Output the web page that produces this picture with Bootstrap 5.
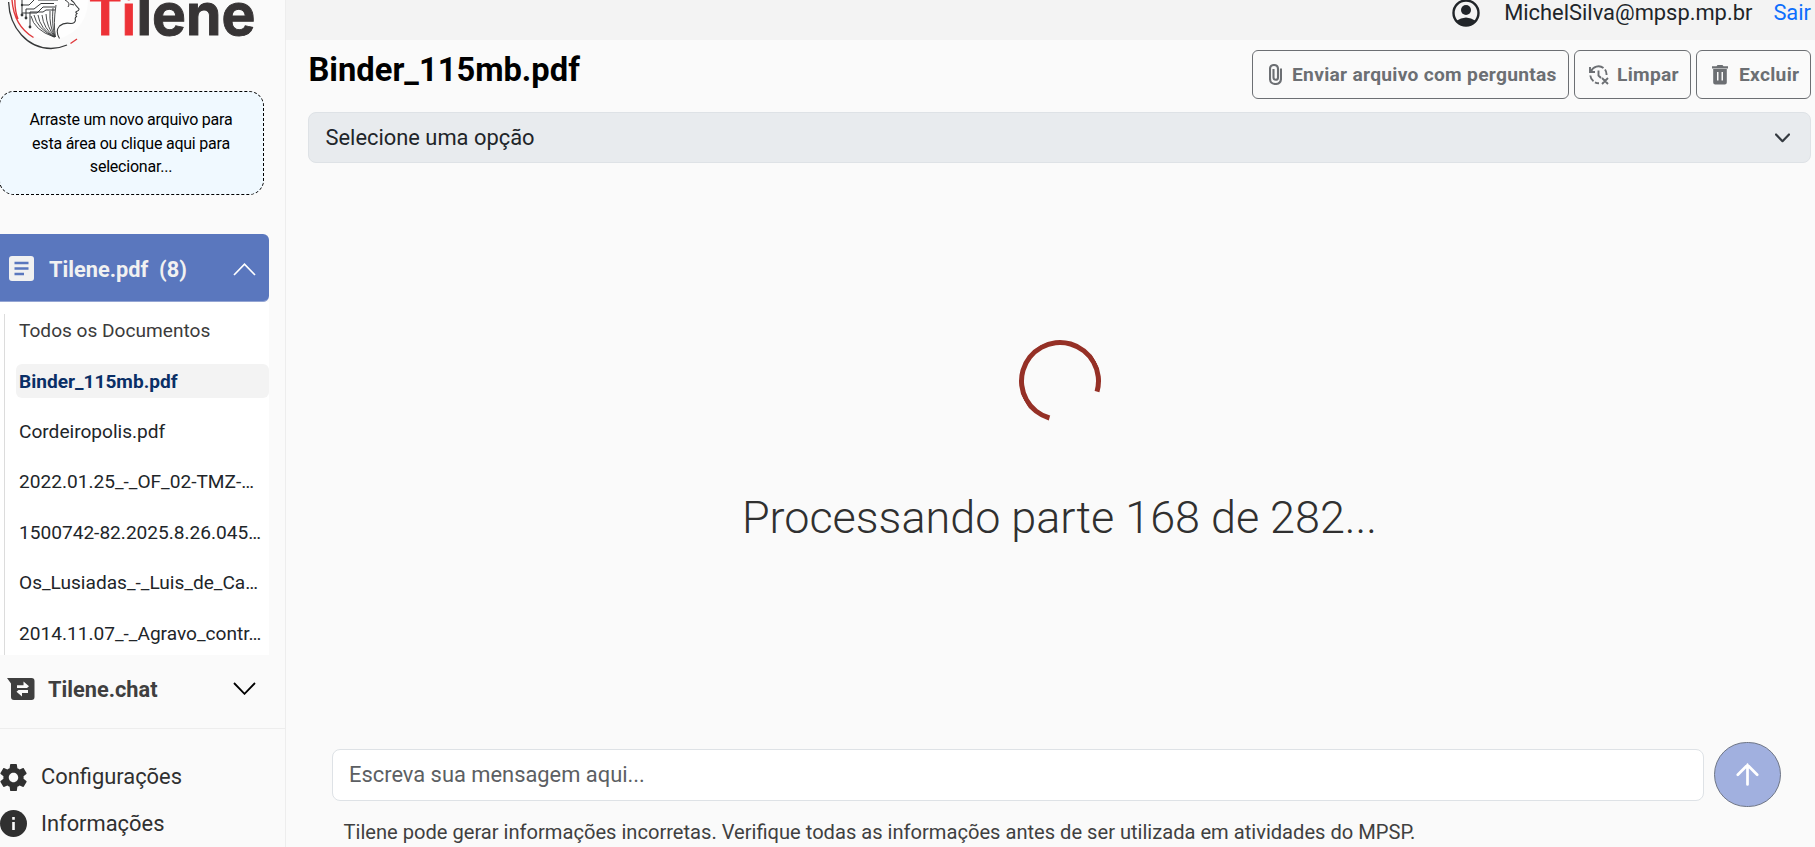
<!DOCTYPE html>
<html lang="pt-br">
<head>
<meta charset="utf-8">
<title>Tilene</title>
<link rel="stylesheet" href="https://cdn.jsdelivr.net/npm/bootstrap@5.3.0/dist/css/bootstrap.min.css">
<style>
html,body{height:100%;overflow:hidden}
body{font-family:Roboto,"Liberation Sans",sans-serif;font-size:21.88px;background:#fafafa;color:#212529}
svg{display:block;flex:none}
.side{width:286px;height:847px;border-right:1px solid #ededed;overflow:hidden}
.logo-box{height:91px}
.drop{width:265px;height:104px;margin-left:-1px;border:1px dashed #000;border-radius:15px;background:#f0f9ff;color:#000;font-size:16px;letter-spacing:-.22px;line-height:23.6px;padding:16px 1px 0 0}
.acc-head{height:68px;width:269px;margin-top:39px;padding:3px 13px 0 9px;background:#5a77be;color:#f1f1f1;border-radius:0 6px 6px 0;border-bottom:1px solid #94a5d3;font-weight:700;font-size:21.75px}
.acc-head span,.chat-head span,.pick span{padding-top:2px}
.acc-head svg:first-child{margin-top:-1px}
.panel{width:269px;height:353px;background:#fff;padding-top:12px}
.docs{margin-left:4px;height:341px;border-left:1px solid #dcdcdc;padding-left:11px;gap:16.45px;font-size:19.1px;overflow:hidden}
.docs a{height:34px;line-height:34.6px;flex:none;padding-left:3px;border-radius:6px;color:#212529;text-decoration:none;white-space:nowrap}
.docs a.first{color:#3b3b3b}
.docs a.on{background:#f3f3f3;color:#0a2f66;font-weight:700;line-height:36px}
.chat-head{height:73px;width:269px;padding:0 13px 4px 7px;color:#3f3f3f;font-weight:700;font-size:21.75px}
.chat-head svg{margin-top:-1px}
.foot{height:119px;border-top:1px solid #ededed;padding-top:33px;color:#303030}
.foot div{gap:14px;line-height:30px}
.main{width:1529px;height:847px}
.top{height:40px;background:#f3f3f3;line-height:25px;padding-right:4px}
.top a{color:#0d6efd;text-decoration:none}
.titlebar{height:72px;padding:10px 4px 0 22.500px}
h1{font-size:32.7px;font-weight:700;line-height:40px;color:#000;margin:0}
.tools{gap:5px}
.tools .btn{height:49px;border:1px solid #6c6f73;border-radius:6px;color:#6c6f73;font-size:19.2px;letter-spacing:.29px;font-weight:700;padding:0}
.tools .btn span{padding-top:1px}
.pick{height:51px;margin:0 4px 0 22px;padding:0 20px 0 16.500px;background:#e8ebee;border:1px solid #dee2e6;border-radius:8px}
.work{height:579px;padding:177px 0 0 18px}
.ring{width:82px;height:82px;border:5px solid #953026;border-bottom-color:transparent;border-radius:50%;transform:rotate(-29deg)}
.status{font-size:44.95px;font-weight:300;line-height:60px;color:#303030;margin-top:66px}
.compose{height:65px;padding-left:46px;gap:10px}
.msg{width:1372px;height:52px;border:1px solid #dee2e6;border-radius:8px;background:#fff;color:#5c5f63;padding:1px 0 0 16px}
.send{width:67px;height:65px;border:1px solid #6f7686;border-radius:33px;background:#a1b0df;padding:0}
.note{font-size:20.11px;line-height:30px;color:#404040;padding-left:57.500px;margin-top:10px;white-space:nowrap}
</style>
</head>
<body class="d-flex">
<aside class="side d-flex flex-column flex-shrink-0">
  <div class="logo-box">
    <svg width="270" height="60" viewBox="0 0 270 60">
      <circle cx="50" cy="2" r="38" fill="#fff" opacity=".7"/>
      <g fill="none" stroke="#37393a" stroke-width="1">
        <path d="M8.600 2C9.500 28 28 48.500 51 48.500C57 48.500 62 47.200 67 45" stroke-width="1.300"/>
        <path d="M31 16Q34 30 54 37M34 15Q37 29 54.500 37M38 15Q40 29 54.500 37M42 15Q43.500 29 55 37M46 14Q46.500 27 55 37M50 11Q49 26 55 37M53 8Q51.500 25 55 37M56 5Q53 24 55.500 37" stroke-width=".9"/>
        <path d="M22 0V15M26 9V18M30 12V27M22 5H29L34 0M26 9H34L41 3.500H54M22 13H37L43 7H55M30 12H43L46 10H55M38 0H58" stroke-width="1"/>
        <path d="M71 0Q74 2 75.500 5L79 9Q79.300 10.500 76.500 11.500Q75 12 77 13.500Q75 15 76.500 16.500Q74.500 18 75.500 20Q75 23.500 71 23.500Q64 22 59.500 26Q55 31 59.500 38.500" stroke-width="1.100"/>
        <path d="M65 0Q71 3 68 7M70 4L74 5"/>
      </g>
      <g fill="#37393a"><circle cx="22" cy="15" r="1.400"/><circle cx="26" cy="18" r="1.400"/><circle cx="30" cy="27" r="1.400"/><circle cx="22" cy="5" r="1.200"/></g>
      <path d="M12 0Q14 26 33.500 37.500M14.800 0Q15 12 18 19M70.500 43.500L77 39" fill="none" stroke="#e0393c" stroke-width="1.400"/>
      <g font-family="Inter" font-weight="700" font-size="57" stroke-width=".9">
        <text x="88.500" y="35" fill="#ed3237" stroke="#ed3237" textLength="47" lengthAdjust="spacingAndGlyphs">Ti</text>
        <text x="136.500" y="35" fill="#373435" stroke="#373435">lene</text>
      </g>
    </svg>
  </div>
  <div class="drop text-center flex-shrink-0">Arraste um novo arquivo para<br>esta área ou clique aqui para<br>selecionar...</div>
  <div class="acc-head d-flex align-items-center flex-shrink-0">
    <svg width="25" height="25" viewBox="0 0 25 25"><rect width="25" height="25" rx="3" fill="#f1f1f1"/><path d="M5.500 7H19.500M5.500 12.500H19.500M5.500 18H15" stroke="#5a77be" stroke-width="2.400"/></svg>
    <span style="margin-left:15px">Tilene.pdf&nbsp; (8)</span>
    <svg class="ms-auto" width="23" height="13" viewBox="0 0 23 13"><path d="M1 12L11.500 1.200L22 12" fill="none" stroke="#fff" stroke-width="1.700"/></svg>
  </div>
  <div class="panel flex-shrink-0">
    <nav class="docs d-flex flex-column">
      <a class="first" href="#">Todos os Documentos</a>
      <a class="on" href="#">Binder_115mb.pdf</a>
      <a href="#">Cordeiropolis.pdf</a>
      <a href="#">2022.01.25_-_OF_02-TMZ-…</a>
      <a href="#">1500742-82.2025.8.26.045…</a>
      <a href="#">Os_Lusiadas_-_Luis_de_Ca…</a>
      <a href="#">2014.11.07_-_Agravo_contr…</a>
    </nav>
  </div>
  <div class="chat-head d-flex align-items-center flex-shrink-0">
    <svg width="28" height="24" viewBox="0 0 28 24"><path d="M0 1H24.500Q27.500 1 27.500 4V20Q27.500 23 24.500 23H7Q4 23 4 20V6.500Z" fill="#3f3f3f"/><path d="M10 8.300H16.500V4.500L22 9.300L20 11H10ZM21 15.900H15V19.500L9.500 14.800L11.500 13.100H21Z" fill="#fafafa"/></svg>
    <span style="margin-left:13px">Tilene.chat</span>
    <svg class="ms-auto" style="margin-top:-3px" width="23" height="13" viewBox="0 0 23 13"><path d="M1 1L11.500 11.800L22 1" fill="none" stroke="#000" stroke-width="1.800"/></svg>
  </div>
  <div class="foot flex-shrink-0">
    <div class="d-flex align-items-center"><svg width="27" height="27" viewBox="2.300 2 19.400 20"><path fill="#303030" d="M19.430 12.980c.040-.320.070-.640.070-.980s-.030-.660-.070-.980l2.110-1.650c.190-.150.240-.420.120-.640l-2-3.460c-.120-.220-.390-.300-.610-.220l-2.490 1c-.520-.400-1.080-.730-1.690-.980l-.380-2.650C14.460 2.180 14.250 2 14 2h-4c-.250 0-.460.180-.490.420l-.380 2.650c-.610.250-1.170.590-1.690.980l-2.490-1c-.230-.090-.490 0-.610.220l-2 3.460c-.130.220-.070.490.120.640l2.110 1.650c-.040.320-.070.650-.070.980s.030.660.070.980l-2.110 1.650c-.190.150-.240.420-.120.640l2 3.460c.120.220.390.300.610.220l2.490-1c.520.400 1.080.730 1.690.980l.380 2.650c.030.240.240.420.490.420h4c.250 0 .460-.180.490-.420l.380-2.650c.610-.250 1.170-.590 1.690-.980l2.490 1c.230.090.490 0 .610-.220l2-3.460c.120-.220.070-.490-.120-.640l-2.110-1.650zM12 15.500c-1.930 0-3.500-1.570-3.500-3.500s1.570-3.500 3.500-3.500 3.500 1.570 3.500 3.500-1.570 3.500-3.500 3.500z"/></svg><span>Configurações</span></div>
    <div class="d-flex align-items-center" style="margin-top:16px"><svg width="27" height="27" viewBox="0 0 27 27"><circle cx="13.500" cy="13.500" r="13.500" fill="#303030"/><path d="M13.500 12V20M13.500 7V9.800" stroke="#fafafa" stroke-width="2.600"/></svg><span style="padding-top:1px;margin-bottom:-1px">Informações</span></div>
  </div>
</aside>
<main class="main flex-shrink-0">
  <header class="top d-flex justify-content-end align-items-start">
    <svg width="28" height="28" viewBox="0 0 28 28" style="margin:-1px 24px 0 0"><circle cx="14" cy="14" r="12.500" fill="none" stroke="#212529" stroke-width="2.400"/><circle cx="14" cy="11" r="5" fill="#212529"/><path d="M4 22Q9 18.500 14 18.500T24 22Q20 26.500 14 26.500T4 22Z" fill="#212529"/></svg>
    <span>MichelSilva@mpsp.mp.br</span>
    <a href="#" style="margin-left:21px">Sair</a>
  </header>
  <section class="titlebar d-flex justify-content-between align-items-start">
    <h1>Binder_115mb.pdf</h1>
    <div class="tools d-flex">
      <button class="btn d-flex align-items-center" style="width:317px"><svg width="13" height="21" viewBox="0 0 13 21" style="margin:0 10px 0 16px"><path d="M12 4.500V14.500Q12 20 6.500 20T1 14.500V5Q1 1 5 1T9 5V13.500Q9 15.800 6.800 15.800T4.500 13.500V5" fill="none" stroke="#6c6f73" stroke-width="2.100"/></svg><span>Enviar arquivo com perguntas</span></button>
      <button class="btn d-flex align-items-center" style="width:117px"><svg width="20" height="20" viewBox="0 0 20 20" style="margin:0 8px 0 14px"><g fill="none" stroke="#6c6f73" stroke-width="1.900"><path d="M1 2V7H6M2 6.500A8 8 0 0 1 14.500 3M16 4.500A8 8 0 0 1 17.500 10M1.300 10.500A8 8 0 0 0 4.500 16.200M6 17.300A8 8 0 0 0 10 18.300M9.500 5.500V10.500L12 13M13 13L19 19M19 13L13 19"/></g></svg><span>Limpar</span></button>
      <button class="btn d-flex align-items-center" style="width:115px"><svg width="16" height="20" viewBox="0 0 16 20" style="margin:0 11px 0 15px"><path fill="#6c6f73" fill-rule="evenodd" d="M0 1.200H4.500L5.500 0H10.500L11.500 1.200H16V3.500H0ZM1.200 4H14.800V17.500Q14.800 19.500 12.800 19.500H3.200Q1.200 19.500 1.200 17.500ZM5 7V15.500H6.500V7ZM9.500 7V15.500H11V7Z"/></svg><span>Excluir</span></button>
    </div>
  </section>
  <div class="pick d-flex align-items-center justify-content-between">
    <span>Selecione uma opção</span>
    <svg width="15" height="10" viewBox="0 0 15 10"><path d="M1 1.500L7.500 8.200L14 1.500" fill="none" stroke="#343a40" stroke-width="2.200" stroke-linecap="round" stroke-linejoin="round"/></svg>
  </div>
  <section class="work d-flex flex-column align-items-center">
    <div class="ring" role="status"></div>
    <div class="status">Processando parte 168 de 282...</div>
  </section>
  <div class="compose d-flex align-items-center">
    <div class="msg d-flex align-items-center">Escreva sua mensagem aqui...</div>
    <button class="send btn d-flex align-items-center justify-content-center"><svg width="23" height="23" viewBox="0 0 23 23"><path d="M11.500 21.500V2M1.800 11.800L11.500 2L21.200 11.800" fill="none" stroke="#fff" stroke-width="2.700" stroke-linecap="round"/></svg></button>
  </div>
  <div class="note">Tilene pode gerar informações incorretas. Verifique todas as informações antes de ser utilizada em atividades do MPSP.</div>
</main>
<script src="https://cdn.jsdelivr.net/npm/bootstrap@5.3.0/dist/js/bootstrap.bundle.min.js"></script>
</body>
</html>
